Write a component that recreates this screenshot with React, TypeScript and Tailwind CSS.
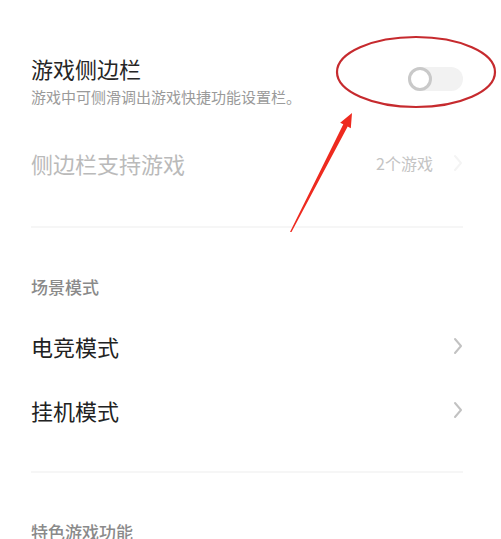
import React from "react";

function Chevron({ color = "#c2c2c2" }: { color?: string }) {
  return (
    <svg width="10" height="18" viewBox="0 0 10 18" fill="none">
      <path d="M2 2 L8 9 L2 16" stroke={color} strokeWidth="2" strokeLinecap="round" strokeLinejoin="round" />
    </svg>
  );
}

function Toggle() {
  return (
    <div className="relative w-[55px] h-[24px] rounded-full bg-[#f2f2f2]">
      <div className="absolute left-0 top-0 w-[24px] h-[24px] rounded-full border-[3px] border-[#c9c9c9] bg-white" />
    </div>
  );
}

export default function App() {
  return (
    <div
      className="relative w-[501px] h-[539px] overflow-hidden bg-white"
      style={{ fontFamily: '"Noto Sans CJK SC", "Noto Sans", sans-serif' }}
    >
      <div className="pl-[31px] pr-[38px]">
        {/* 游戏侧边栏 */}
        <div className="pt-[54px] flex items-start justify-between">
          <div className="flex flex-col">
            <div className="text-[22px] leading-[28px] text-[#262626]">游戏侧边栏</div>
            <div className="mt-[5px] text-[15px] leading-[20px] text-[#9a9a9a]">游戏中可侧滑调出游戏快捷功能设置栏。</div>
          </div>
          <div className="mt-[13px]">
            <Toggle />
          </div>
        </div>

        {/* 侧边栏支持游戏 */}
        <div className="mt-[42px] h-[28px] flex items-center justify-between">
          <div className="text-[22px] leading-[28px] text-[#bababa]">侧边栏支持游戏</div>
          <div className="flex items-center gap-[20px]">
            <span className="text-[16px] leading-[22px] text-[#c4c4c4]">2个游戏</span>
            <Chevron color="#f4f4f4" />
          </div>
        </div>

        <div className="mt-[49px] h-[2px] bg-[#f6f6f6]" />

        {/* 场景模式 */}
        <div className="mt-[47px] text-[17px] leading-[24px] text-[#8a8a8a] font-medium">场景模式</div>
        <div className="mt-[15px] h-[64px] flex items-center justify-between">
          <div className="text-[22px] leading-[28px] text-[#222222]">电竞模式</div>
          <Chevron />
        </div>
        <div className="h-[64px] flex items-center justify-between">
          <div className="text-[22px] leading-[28px] text-[#222222]">挂机模式</div>
          <Chevron />
        </div>

        <div className="mt-[29px] h-[2px] bg-[#f6f6f6]" />

        <div className="mt-[47px] text-[17px] leading-[24px] text-[#8a8a8a] font-medium">特色游戏功能</div>
      </div>

      {/* annotation overlay */}
      <svg className="absolute left-0 top-0 pointer-events-none" width="501" height="539" viewBox="0 0 501 539">
        <ellipse cx="416" cy="72" rx="79" ry="35" fill="none" stroke="#c62a2e" strokeWidth="2.2" />
        <polygon
          points="290,232 343.3,124.3 340.2,122.7 352,113 350.8,128.3 347.7,126.6 291.5,232"
          fill="#ee2a1f"
        />
      </svg>
    </div>
  );
}
